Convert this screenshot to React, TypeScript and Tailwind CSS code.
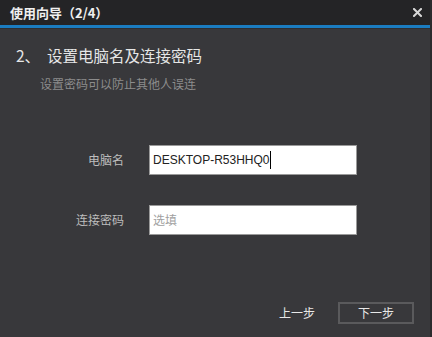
import React from "react";

export default function App() {
  const cjk = { fontFamily: '"Noto Sans CJK SC", "Liberation Sans", sans-serif' };
  return (
    <div className="w-[432px] h-[337px] bg-[#38383b] flex flex-col border-r-2 border-[#2b2b2d] overflow-hidden" style={cjk}>
      {/* title bar */}
      <div className="h-[25px] bg-[#242426] flex items-center justify-between pl-[10px] pr-[8px] shrink-0">
        <span className="text-[13px] font-bold text-[#f0f0f0] leading-none">使用向导（2/4）</span>
        <svg width="9" height="9" viewBox="0 0 9 9">
          <path d="M1 1 L8 8 M8 1 L1 8" stroke="#d8d8d8" strokeWidth="2" strokeLinecap="square" />
        </svg>
      </div>
      <div className="h-[3px] bg-[#1b7cc0] shrink-0" />
      <div className="h-[1px] bg-[#2e2e31] shrink-0" />

      {/* body */}
      <div className="flex-1 flex flex-col">
        <div className="pl-[16px] pt-[15px] text-[15.5px] text-[#e6e6e6] leading-[22px] whitespace-pre">
          {"2、  设置电脑名及连接密码"}
        </div>
        <div className="pl-[40px] pt-[10px] text-[12px] text-[#8c8c8c] leading-[16px]">
          设置密码可以防止其他人误连
        </div>

        <div className="mt-[53px] flex flex-col gap-[30px]">
          <div className="flex items-center">
            <div className="w-[124px] text-right text-[12px] text-[#bdbdbd]">电脑名</div>
            <div className="ml-[25px] w-[208px] h-[30px] bg-white border border-[#9a9a9a] flex items-center pl-[3px]">
              <span className="text-[12px] text-[#222]" style={{ fontFamily: '"Liberation Sans", sans-serif' }}>
                DESKTOP-R53HHQ0
              </span>
              <span className="w-[1px] h-[18px] bg-black ml-[1px]" />
            </div>
          </div>
          <div className="flex items-center">
            <div className="w-[124px] text-right text-[12px] text-[#bdbdbd]">连接密码</div>
            <div className="ml-[25px] w-[208px] h-[30px] bg-white border border-[#9a9a9a] flex items-center pl-[3px]">
              <span className="text-[12px] text-[#a0a0a0]">选填</span>
            </div>
          </div>
        </div>

        <div className="mt-auto mb-[13px] flex items-center justify-end pr-[16px]">
          <span className="text-[12px] text-[#e8e8e8] mr-[23px]">上一步</span>
          <div className="w-[76px] h-[22px] border-2 border-[#5a5a5c] flex items-center justify-center text-[12px] text-[#e8e8e8]">
            下一步
          </div>
        </div>
      </div>
    </div>
  );
}
